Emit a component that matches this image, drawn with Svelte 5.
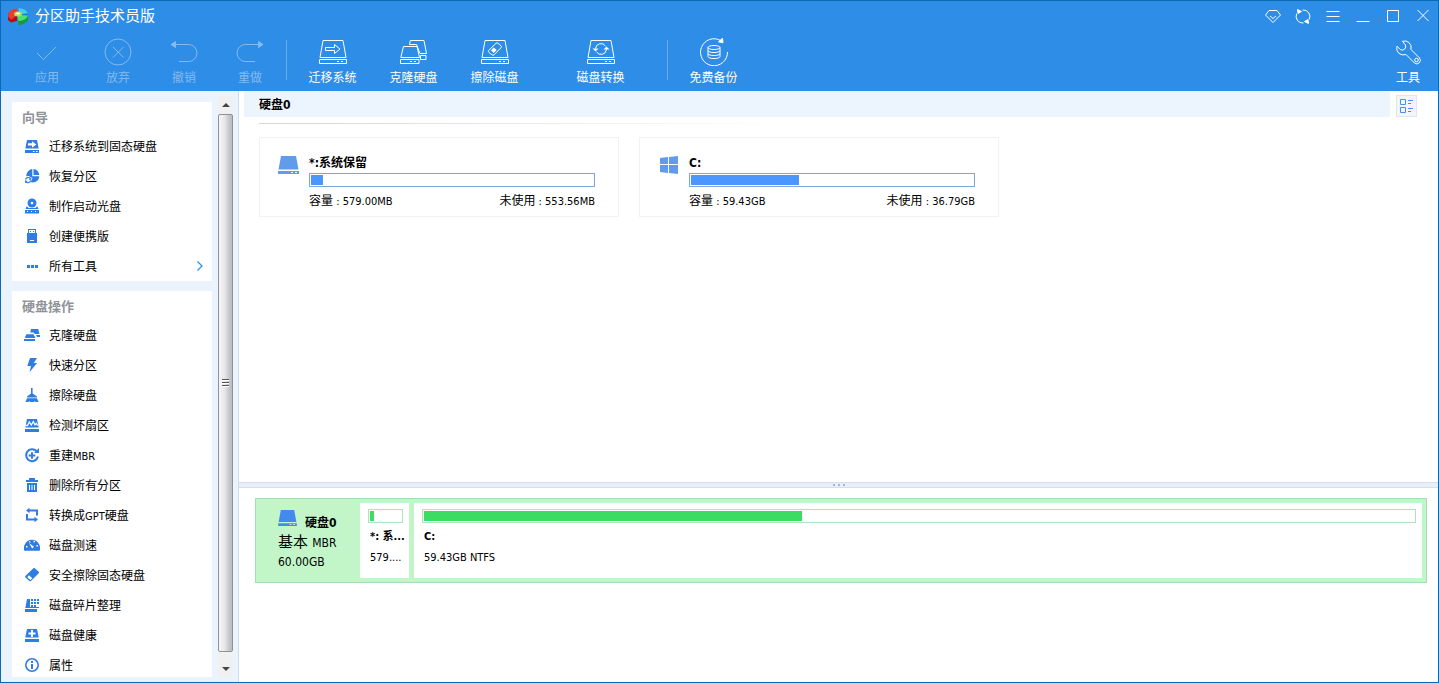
<script>
  const diskBody = '<path d="M4 2.5h20l3 17H1z"/><path d="M.5 21.5h27v4H.5z"/><path d="M18 23.5h2M22 23.5h2"/>';

  const tools = {
    apply: '<path d="M4 15l6.500 6.500L23 9"/>',
    discard: '<circle cx="14" cy="14" r="13"/><path d="M9 9l10.500 10.500M19.500 9L9 19.500"/>',
    undo: '<path d="M2 6.500h16.500a8.500 8.500 0 0 1 0 17H9"/><path d="M1 6.500l4.500-3v6z" fill="currentColor"/>',
    redo: '<path d="M26 6.500H9.500a8.500 8.500 0 0 0 0 17H19"/><path d="M27 6.500l-4.500-3v6z" fill="currentColor"/>',
    migrate: diskBody + '<path d="M6.500 9.500h9v-3l5.500 4.500-5.500 4.500v-3h-9z"/>',
    clone: '<path d="M3.500 8.500h13.500l2.500 11H.8zM.5 21.500h18.500v4H.5z"/><path d="M10 23.500h2M14 23.500h2M9.500 6.500l.8-4h13.700l2.500 13h-6.500l-3.500-9zM20.500 17.500h5.500v4h-5.500z"/>',
    erase: diskBody + '<path d="M7.800 12.300l7.200-7q1-1 2 0l3 2.500q1 1 0 2l-7 7q-1 1-2 0l-3.200-2.500q-1-1 0-2z"/><path d="M10 12.300l2.700-2.800 3 2.500-3 3z" fill="currentColor" stroke="none"/>',
    convert: diskBody + '<path d="M8.500 10.500a5.500 5.500 0 0 1 10-2.500M19.500 11.500a5.500 5.500 0 0 1-10 2.500"/><path d="M16.500 11.500h6l-3-3zM5.500 10.500h6l-3 3z" fill="currentColor" stroke="none"/>',
    backup: '<path d="M21 2.700A13.500 13.500 0 1 0 27.500 14"/><path d="M18.500 3.800l4-3.600.5 4.500z" fill="currentColor"/><ellipse cx="14" cy="9.500" rx="6" ry="2"/><path d="M8 9.500v9c0 2.700 12 2.700 12 0v-9M8 12.500c0 2.700 12 2.700 12 0M8 15.500c0 2.700 12 2.700 12 0"/>',
    wrench: '<path d="M8.500 3.300q3.500-1.200 6.500 1.200 3 3 2 7l8.500 8.500q2 2.500-.2 4.800-2.300 2.300-4.800.2L12 16.500q-4 1.500-7.300-1.300-3-3-1.700-7l3.500 3.500q2.200 1.200 4.200-.7 1.800-2 .7-4z"/><circle cx="22.500" cy="22" r="1.800"/>'
  };

  const smallDisk = '<path d="M3 2h10l1.700 8.500H1.300z"/><path d="M1 12h14v3H1z"/>';
  const small = {
    migrate: smallDisk + '<path d="M4 5.200h4V3.300l4.300 3.200L8 9.700V7.600H4z" fill="#fff"/><path d="M9 13h1.500v1H9zm3 0h1.500v1H12z" fill="#fff"/>',
    restore: '<path d="M9.500 1a6.200 6.200 0 0 1 5.800 6H9.500z"/><path d="M8.300 1v7.300h7a6.500 6.500 0 0 1-6.500 6.200q-1 0-2-.4L8.500 10 4.500 8 2.300 8.300A7 7 0 0 1 8.300 1z"/><path d="M1.500 11.500a2.800 2.800 0 0 1 4.800-1M6.700 12.300a2.800 2.800 0 0 1-4.800 1.500" fill="none" stroke="currentColor" stroke-width="1.200"/><path d="M7.300 9v2.800H4.700zM1 15.300v-3l2.600.7z"/>',
    boot: '<circle cx="8" cy="5" r="4.500"/><circle cx="8" cy="5" r="1.300" fill="#fff"/><path d="M2.700 8.200l2 1.700h6.600l2-1.700 1.200 2.800H1.500z"/><path d="M1 12h14v3.500H1z"/><path d="M3 13h1v1H3zm4 0h1v1H7zm4 0h1v1h-1z" fill="#fff"/>',
    usb: '<path d="M4 1h8v4H4z"/><path d="M3 5h10v9.500q0 .5-.5.500h-9q-.5 0-.5-.5z"/><path d="M5 2h6v3H5z" fill="#fff"/><path d="M6 3h1v1H6zm3 0h1v1H9z"/><path d="M6 12h4v1H6z" fill="#fff"/>',
    more: '<path d="M3 7h3v3H3zm4 0h3v3H7zm4 0h3v3h-3z"/>',
    clone: '<path d="M2.300 7.200h7.200l2 3.800H.8zM0 12h11v2H0zM7 2h7.200l1.300 5h-4.800L9.600 5.500H6.300zM12 8h4v2h-3z"/>',
    bolt: '<path d="M6 1h7l-3.200 5H13L5.500 15.200 7 9H3.300z"/>',
    broom: '<path d="M7 1h1.600v5.500l4.400 3v1H3v-1l4-3zM3 11.200h10l1.500 3.800h-3l-.8-1-.6 1H6l-.7-1-.8 1h-3z"/>',
    sector: smallDisk + '<path d="M1.500 8.500h2L5.300 5l2 3 2-3.500 1.700 3.300 1.200-1.500 1.500 2.200" fill="none" stroke="#fff" stroke-width="1.300"/>',
    rebuild: '<path d="M12.500 4A6 6 0 1 0 14 9.500" fill="none" stroke="currentColor" stroke-width="2"/><path d="M15 1v5h-5z"/><path d="M7 5.200h2V7.500h2.300v2H9v2.300H7V9.500H4.700v-2H7z"/>',
    trash: '<path d="M2 3h12v2H2zM5 1h6v2H5zM3 6h10v9H3z"/><path d="M5 8h1v5H5zm2.500 0h1v5h-1zm2.500 0h1v5h-1z" fill="#fff"/>',
    gpt: '<path d="M5 3.500h8v5M3 7v5.500h8" fill="none" stroke="currentColor" stroke-width="2"/><path d="M5.500.8v5.400L2 3.500zM10.500 15.300V9.700L14 12.500z"/>',
    gauge: '<path d="M.3 13.800A7.700 7.700 0 0 1 .8 7.500a7.800 7.800 0 0 1 14.400 0 7.700 7.700 0 0 1 .5 6.300z"/><path d="M5 6l5 3.800-1.800 1.700zM2 9h1.500v1.500H2zm3-4.800h1.300v1.300H5zm4.500-.4H11v1.500H9.500zm3 4.200H14v1.500h-1.500z" fill="#fff"/>',
    eraser: '<path d="M9.300 1.300q.7-.7 1.500 0l3.900 3.500q.7.7 0 1.500L7 14q-.8.700-1.600 0l-4-3.500q-.7-.8 0-1.600z"/><path d="M5 8.300l3.300 3-2 1.700-3-2.800z" fill="#fff"/>',
    defrag: '<path d="M3 2h3v8h9v1H1.300zM1 12h12v3H1z"/><path d="M7 2h2v2H7zm3 0h2v2h-2zm3 0h2v2h-2zM7 5h2v2H7zm3 0h2v2h-2zm3 0h2v2h-2zM7 8h2v2H7zm3 0h2v2h-2z"/>',
    health: smallDisk + '<path d="M7 3h2v2.500h2.500v2H9V10H7V7.500H4.500v-2H7z" fill="#fff"/>',
    info: '<circle cx="8" cy="8" r="6.200" fill="none" stroke="currentColor" stroke-width="1.600"/><path d="M7 4h2v2H7zm0 3h2v5H7z"/>'
  };

  const groups = [
    [
      { icon: 'apply', label: '应用', off: true },
      { icon: 'discard', label: '放弃', off: true },
      { icon: 'undo', label: '撤销', off: true },
      { icon: 'redo', label: '重做', off: true }
    ],
    [
      { icon: 'migrate', label: '迁移系统' },
      { icon: 'clone', label: '克隆硬盘' },
      { icon: 'erase', label: '擦除磁盘' },
      { icon: 'convert', label: '磁盘转换' }
    ],
    [{ icon: 'backup', label: '免费备份' }]
  ];

  const windowButtons = [
    { name: '升级', art: '<path d="M5 3.500h8l3.500 4.500L9 15.500 1.500 8z"/><path d="M6 9l3 2.500L12 9"/>' },
    { name: '刷新', art: '<path d="M2.800 6.500A6.600 6.600 0 0 0 9.500 16M8.500 3a6.600 6.600 0 0 1 6.700 9.500"/><path d="M3.500 2.500L4 6.500l3.500-2zM14.500 16.500L14 12.500l-3.500 2z" fill="currentColor"/>' },
    { name: '菜单', art: '<path d="M2.500 4.500h13M2.500 9.500h13M2.500 14.500h13"/>' },
    { name: '最小化', art: '<path d="M2.500 14.500h13"/>' },
    { name: '最大化', art: '<path d="M3.500 3.500h11v11h-11z"/>' },
    { name: '关闭', art: '<path d="M3.500 3l11 11M14.500 3l-11 11"/>' }
  ];

  const panels = [
    {
      title: '向导',
      items: [
        { icon: 'migrate', label: '迁移系统到固态硬盘' },
        { icon: 'restore', label: '恢复分区' },
        { icon: 'boot', label: '制作启动光盘' },
        { icon: 'usb', label: '创建便携版' },
        { icon: 'more', label: '所有工具', more: true }
      ]
    },
    {
      title: '硬盘操作',
      items: [
        { icon: 'clone', label: '克隆硬盘' },
        { icon: 'bolt', label: '快速分区' },
        { icon: 'broom', label: '擦除硬盘' },
        { icon: 'sector', label: '检测坏扇区' },
        { icon: 'rebuild', label: '重建', latin: 'MBR' },
        { icon: 'trash', label: '删除所有分区' },
        { icon: 'gpt', label: '转换成', latin: 'GPT', tail: '硬盘' },
        { icon: 'gauge', label: '磁盘测速' },
        { icon: 'eraser', label: '安全擦除固态硬盘' },
        { icon: 'defrag', label: '磁盘碎片整理' },
        { icon: 'health', label: '磁盘健康' },
        { icon: 'info', label: '属性' }
      ]
    }
  ];

  const partitions = [
    { name: '*:系统保留', short: '*: 系...', size: '579.00MB', free: '553.56MB', used: 4.4, detail: '579....' },
    { name: 'C:', short: 'C:', size: '59.43GB', free: '36.79GB', used: 38.2, detail: '59.43GB NTFS', windows: true }
  ];
</script>

{#snippet drive()}
  <svg class="drive" viewBox="0 0 21 18" aria-hidden="true">
    <path d="M3 0h15l2.500 13.500H.5zM0 15h21v3H0z" fill="currentColor" />
    <path d="M13 16h2v1h-2zM17 16h2v1h-2z" fill="#fff" />
  </svg>
{/snippet}

<div class="window">
  <header>
    <div class="titlebar">
      <svg class="logo" viewBox="0 0 20 17" aria-hidden="true">
        <path d="M8.500 1L1 4.500 0 9v3l3 2.500L9 13V7z" fill="#b40d12" />
        <path d="M9 .5Q1 1 .2 7q0 3 3.300 4.500L10 6.500z" fill="#ee3a35" />
        <path d="M10.500 0q7 0 9.500 5v5l-9-3z" fill="#1186bd" />
        <path d="M10.500 0q7.500.5 9.500 5.300L11 6.500z" fill="#46c8f5" />
        <path d="M9.500 7.500L20 8v4q-3 5-9.500 5z" fill="#159b3e" />
        <path d="M9.500 7L20 7.500q-2 5-9.500 5.500z" fill="#4be06f" />
        <ellipse cx="10" cy="6" rx="4" ry="2.500" fill="#b9dd4c" />
        <ellipse cx="10" cy="5.500" rx="2" ry="1" fill="#fff" />
      </svg>
      <h1>分区助手技术员版</h1>
      <div class="controls">
        {#each windowButtons as b}
          <button aria-label={b.name}>
            <svg width="18" height="18" viewBox="0 0 18 18">{@html b.art}</svg>
          </button>
        {/each}
      </div>
    </div>
    <nav class="toolbar">
      {#each groups as group}
        <div class="group">
          {#each group as t}
            <button class="tool" disabled={t.off}>
              <svg width="28" height="28" viewBox="0 0 28 28">{@html tools[t.icon]}</svg>
              <span>{t.label}</span>
            </button>
          {/each}
        </div>
      {/each}
      <button class="tool last">
        <svg width="28" height="28" viewBox="0 0 28 28">{@html tools.wrench}</svg>
        <span>工具</span>
      </button>
    </nav>
  </header>

  <div class="body">
    <aside>
      <div class="panels">
        {#each panels as p}
          <section>
            <h2>{p.title}</h2>
            <ul>
              {#each p.items as item}
                <li>
                  <button>
                    <svg width="16" height="16" viewBox="0 0 16 16">{@html small[item.icon]}</svg>
                    <span>{item.label}{#if item.latin}<small>{item.latin}</small>{/if}{item.tail ?? ''}</span>
                    {#if item.more}
                      <svg class="chevron" width="8" height="12" viewBox="0 0 8 12"><path d="M1.500 1.500L6 6l-4.500 4.500" /></svg>
                    {/if}
                  </button>
                </li>
              {/each}
            </ul>
          </section>
        {/each}
      </div>
      <div class="scroll">
        <button aria-label="向上滚动"><svg width="8" height="4" viewBox="0 0 8 4"><path d="M4 0l4 4H0z" /></svg></button>
        <div class="thumb"><i></i><i></i><i></i></div>
        <button class="down" aria-label="向下滚动"><svg width="8" height="4" viewBox="0 0 8 4"><path d="M4 4l4-4H0z" /></svg></button>
      </div>
    </aside>

    <main>
      <section class="overview">
        <div class="diskhead">
          <h3>硬盘0</h3>
          <button aria-label="切换视图">
            <svg width="15" height="16" viewBox="0 0 15 16"><path d="M1.500 1.500h5v5h-5zM1.500 9.500h5v5h-5zM9 2.500h5M9 5.500h3M9 10.500h5M9 13.500h3" /></svg>
          </button>
        </div>
        <div class="rule"></div>
        <div class="cards">
          {#each partitions as p}
            <article>
              <div class="glyph">
                {#if p.windows}
                  <svg class="logo-win" width="18" height="18" viewBox="0 0 18 18" fill="currentColor"><path d="M0 2l8-1v7H0zM9 1l9-1v8H9zM0 9h8v8l-8-1zM9 9h9v9l-9-1z" /></svg>
                {:else}
                  {@render drive()}
                {/if}
              </div>
              <div class="info">
                <h4>{p.name}</h4>
                <div class="bar"><div style:width="{p.used}%"></div></div>
                <p>
                  <span>容量<small>{` : ${p.size}`}</small></span>
                  <span>未使用<small>{` : ${p.free}`}</small></span>
                </p>
              </div>
            </article>
          {/each}
        </div>
      </section>

      <div class="splitter"><i></i><i></i><i></i></div>

      <section class="map">
        <div class="disk">
          <div class="summary">
            <div class="name">{@render drive()}<strong>硬盘0</strong></div>
            <div class="kind">基本 <small>MBR</small></div>
            <div class="total">60.00GB</div>
          </div>
          {#each partitions as p}
            <div class="part" class:grow={p.windows}>
              <div class="bar green"><div style:width="{p.windows ? p.used : 14}%"></div></div>
              <strong>{p.short}</strong>
              <span>{p.detail}</span>
            </div>
          {/each}
        </div>
      </section>
    </main>
  </div>
</div>

<style>
  :global(body) { margin: 0; }
  .window, .window * { box-sizing: border-box; }
  .window {
    display: flex;
    flex-direction: column;
    height: 100vh;
    border: 1px solid #0b68b2;
    background: #fff;
    color: #000;
    font: 12px/16px "DejaVu Sans Condensed", "Noto Sans CJK SC", sans-serif;
  }
  button {
    padding: 0;
    border: 0;
    background: none;
    color: inherit;
    font: inherit;
  }
  svg { display: block; flex: none; }
  h1, h2, h3, h4, p, ul { margin: 0; padding: 0; }
  ul { list-style: none; }
  small { font-size: 11px; }

  header { flex: none; background: #2e8de7; color: #fff; }
  header button svg { fill: none; stroke: currentColor; stroke-width: 1; }
  .titlebar { display: flex; align-items: center; height: 30px; padding-left: 7px; gap: 7px; }
  .logo { width: 20px; height: 17px; }
  h1 { flex: 1; font-size: 15px; font-weight: 400; line-height: 20px; }
  .controls { display: flex; }
  .controls button { display: grid; place-items: center; width: 30px; height: 30px; }
  .toolbar { display: flex; height: 60px; }
  .group { display: flex; }
  .group + .group::before {
    content: "";
    width: 1px;
    height: 40px;
    margin: 9px 5px 0 3px;
    background: #63acee;
  }
  .group:nth-child(3)::before { margin-left: 26px; }
  .group:first-child { padding-left: 13px; }
  .tool {
    display: flex;
    flex-direction: column;
    align-items: center;
    gap: 4px;
    width: 81px;
    padding-top: 7px;
  }
  .group:first-child .tool { width: 66px; }
  .group:first-child .tool:first-child { margin-right: 5px; }
  .group:nth-child(2) .tool:last-child { margin-left: 25px; }
  .tool:disabled { color: #82bbf1; }
  .tool.last { width: 60px; margin-left: auto; }

  .body { display: flex; flex: 1; min-height: 0; }
  aside {
    display: flex;
    flex: none;
    gap: 6px;
    width: 238px;
    padding: 5px 5px 5px 11px;
    border-right: 1px solid #cfdcec;
    background: #ebf3fe;
  }
  .panels {
    display: flex;
    flex-direction: column;
    gap: 10px;
    width: 200px;
    padding-top: 6px;
    overflow: hidden;
  }
  .panels section { flex: none; background: #fff; }
  h2 { height: 29px; padding-left: 10px; color: #909399; font-size: 13px; line-height: 31px; }
  li button { display: flex; align-items: center; gap: 9px; width: 100%; height: 30px; padding: 0 8px 0 12px; text-align: left; }
  li svg { color: #2f7de4; fill: currentColor; }
  li span { flex: 1; padding-top: 2px; }
  .chevron path { fill: none; stroke: #2e92f0; stroke-width: 1.3; }
  .scroll { display: flex; flex-direction: column; width: 15px; background: #f0f0f0; }
  .scroll button { display: grid; place-items: center; height: 18px; }
  .scroll .down { height: 25px; padding-top: 8px; }
  .scroll svg { fill: #444; }
  .thumb {
    display: flex;
    flex: 1;
    flex-direction: column;
    align-items: center;
    justify-content: center;
    gap: 1px;
    border: 1px solid #8f9194;
    border-radius: 2px;
    background: linear-gradient(90deg, #f6f6f6 0, #e6e6e8 45%, #c8c9cd 75%, #bbbcc0);
  }
  .thumb i { width: 7px; height: 2px; border-top: 1px solid #555; background: #fff; }

  main { display: flex; flex: 1; flex-direction: column; min-width: 0; }
  .overview { flex: 1; min-height: 0; }
  .diskhead { display: flex; align-items: flex-end; gap: 6px; height: 26px; padding: 0 21px 0 5px; }
  h3 { flex: 1; height: 26px; padding-left: 15px; background: #ecf4fe; font-size: 12px; line-height: 28px; }
  .diskhead button { display: grid; place-items: center; width: 21px; height: 22px; border: 1px solid #e2e6ee; background: #f2f6fc; }
  .diskhead path { fill: none; stroke: #4d8fe4; stroke-width: 1; }
  .rule { height: 1px; margin: 6px 20px 13px; background: linear-gradient(90deg, #d3d5e0, #fff 45%); }
  .cards { display: flex; flex-wrap: wrap; gap: 20px; padding: 0 20px; }
  article { display: flex; width: 360px; height: 80px; padding: 17px 23px 0 18px; border: 1px solid #f1f2f5; }
  .glyph { width: 31px; padding-top: 1px; color: #619bec; }
  .logo-win { margin-left: 2px; }
  .drive { width: 21px; height: 18px; }
  .info { flex: 1; }
  h4 { font-size: 12px; }
  .bar { height: 14px; padding: 1px; border: 1px solid #7fa5da; background: #fff; }
  .bar div { height: 100%; background: #4c97ff; }
  .info .bar { margin: 2px 0 6px; }
  p { display: flex; justify-content: space-between; }

  .splitter {
    display: flex;
    align-items: center;
    justify-content: center;
    gap: 3px;
    height: 6px;
    border: solid #d5deea;
    border-width: 1px 0;
    background: #e9eff8;
  }
  .splitter i { width: 2px; height: 2px; background: #a8b6cf; }
  .map { height: 194px; padding: 10px 11px 0 16px; }
  .disk { display: flex; gap: 5px; height: 85px; padding: 4px; border: 1px solid #a3dfb2; background: #c2f6c9; }
  .summary { width: 95px; padding: 7px 0 0 18px; }
  .name { display: flex; align-items: flex-start; gap: 8px; height: 21px; color: #448aee; }
  .name .drive { width: 19px; height: 16px; }
  .name strong { padding-top: 5px; color: #000; }
  .kind { font-size: 15px; line-height: 22px; }
  .kind small { font-size: 12px; }
  .part { display: flex; flex-direction: column; width: 49px; padding: 6px 6px 0 8px; background: #fff; white-space: nowrap; font-size: 11px; }
  .part.grow { flex: 1; }
  .part .bar { flex: none; }
  .bar.green { border-color: #b0e3bd; }
  .bar.green div { background: #3adc62; }
  .part strong, .part span { padding-left: 2px; }
  .part strong { margin: 6px 0 5px; }
</style>
